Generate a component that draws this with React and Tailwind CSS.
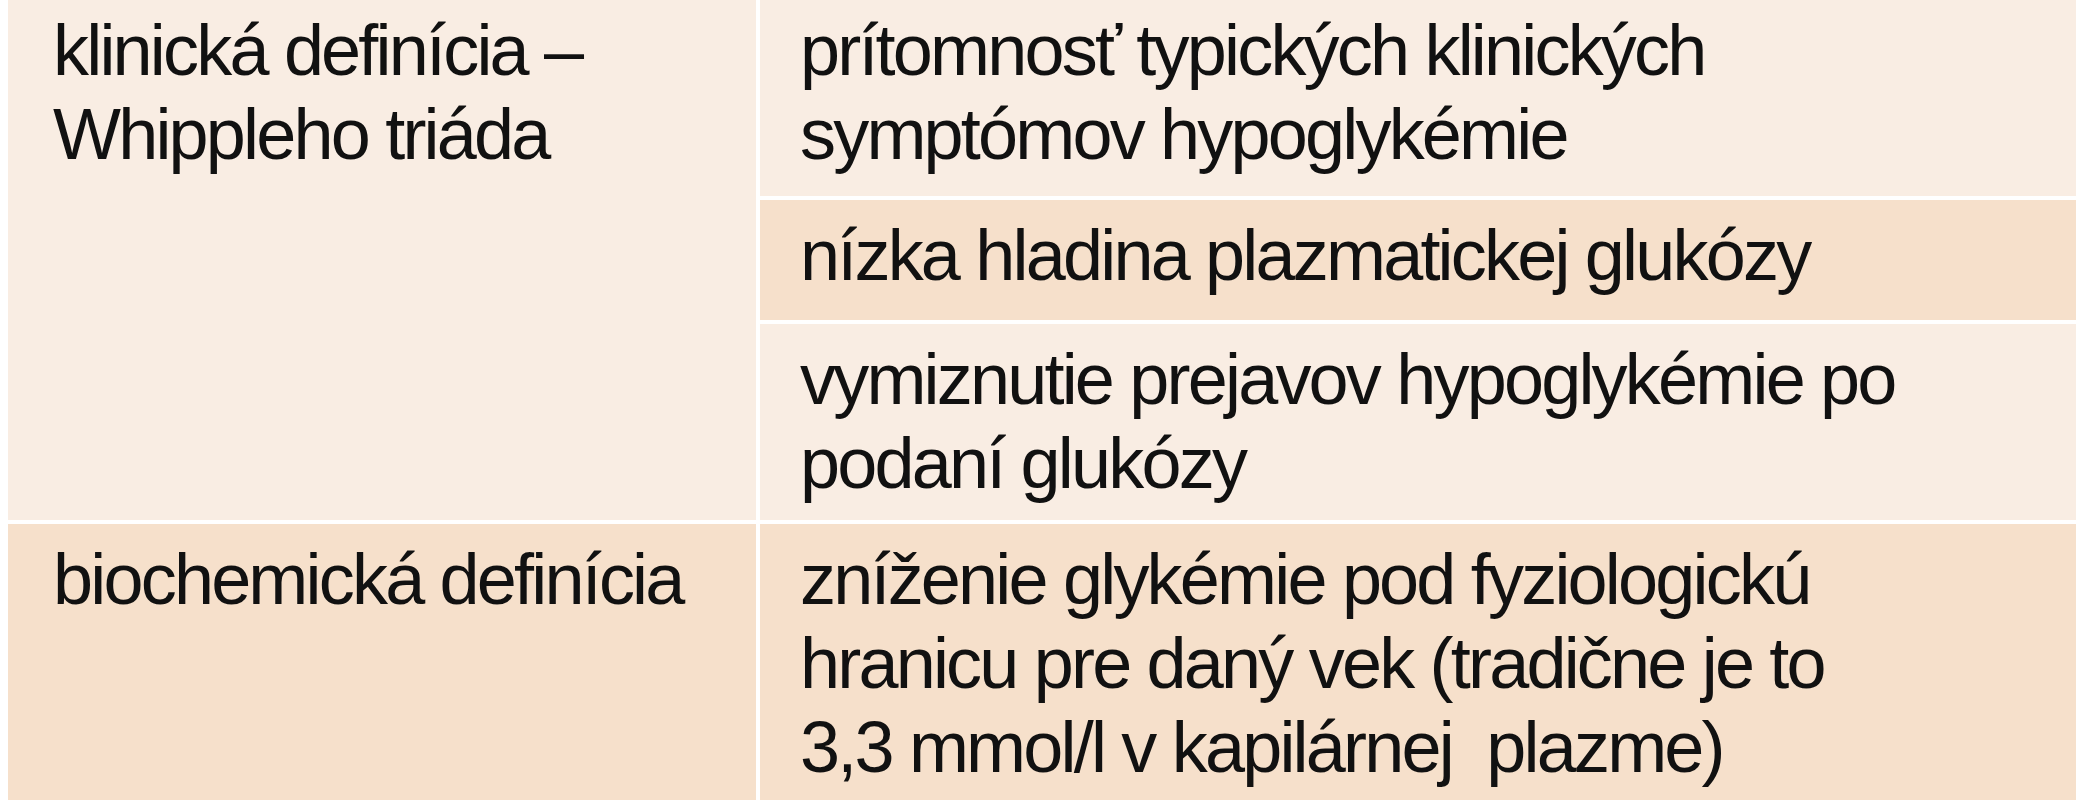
const rows = [
    {
        label: ['klinická definícia –', 'Whippleho triáda'],
        items: [
            { lines: ['prítomnosť typických klinických', 'symptómov hypoglykémie'] },
            { lines: ['nízka hladina plazmatickej glukózy'] },
            { lines: ['vymiznutie prejavov hypoglykémie po', 'podaní glukózy'] },
        ],
    },
    {
        label: ['biochemická definícia'],
        items: [
            { lines: ['zníženie glykémie pod fyziologickú', 'hranicu pre daný vek (tradične je to', '3,3 mmol/l v kapilárnej\u00a0 plazme)'] },
        ],
    },
];

function Lines({ lines }) {
    return lines.map((line, i) => (
        <span key={i} className="block whitespace-nowrap">{line}</span>
    ));
}

export default function App() {
    return (
        <div className="w-[2076px] h-[800px] overflow-hidden bg-white pl-2 font-[family-name:'Liberation_Sans',Arial,sans-serif] text-[72px] leading-[84px] tracking-[-2.8px] text-[#111]">
            <div className="grid grid-cols-[748px_1fr] gap-x-[4px] gap-y-[4px]">
                {/* clinical definition, spans 3 sub rows */}
                <div className="row-span-3 bg-[#f9ede3] pl-[45px] pt-[8px]">
                    <Lines lines={rows[0].label} />
                </div>
                <div className="h-[196px] bg-[#f9ede3] pl-[40px] pt-[8px]">
                    <Lines lines={rows[0].items[0].lines} />
                </div>
                <div className="h-[120px] bg-[#f6e0cb] pl-[40px] pt-[13px]">
                    <Lines lines={rows[0].items[1].lines} />
                </div>
                <div className="h-[196px] bg-[#f9ede3] pl-[40px] pt-[13px]">
                    <Lines lines={rows[0].items[2].lines} />
                </div>

                {/* biochemical definition */}
                <div className="bg-[#f6e0cb] pl-[45px] pt-[13px] pb-[24px]">
                    <Lines lines={rows[1].label} />
                </div>
                <div className="bg-[#f6e0cb] pl-[40px] pt-[13px] pb-[24px]">
                    <Lines lines={rows[1].items[0].lines} />
                </div>
            </div>
        </div>
    );
}
